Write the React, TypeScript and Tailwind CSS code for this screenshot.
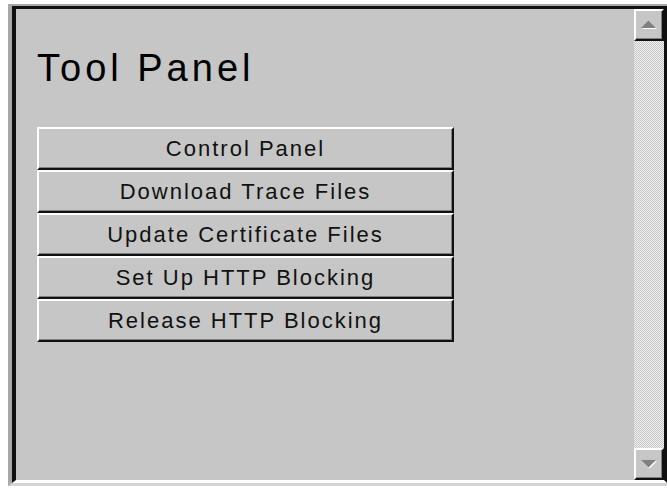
import React from "react";

const actions = [
  "Control Panel",
  "Download Trace Files",
  "Update Certificate Files",
  "Set Up HTTP Blocking",
  "Release HTTP Blocking",
];

function Arrow({ up }: { up: boolean }) {
  return (
    <svg width="18" height="10" viewBox="0 0 18 10">
      {up ? (
        <>
          <polygon points="2,9 17,9 9.5,1.5" fill="#ffffff" />
          <polygon points="1,8 16,8 8.5,0.5" fill="#808080" />
        </>
      ) : (
        <>
          <polygon points="2,2 17,2 9.5,9.5" fill="#ffffff" />
          <polygon points="1,1 16,1 8.5,8.5" fill="#808080" />
        </>
      )}
    </svg>
  );
}

function ScrollButton({ up }: { up: boolean }) {
  return (
    <div className="h-[32px] w-full flex items-center justify-center bg-[#c6c6c6] border-t-2 border-l-2 border-t-white border-l-white border-b-2 border-r-2 border-b-[#101010] border-r-[#101010] shadow-[inset_-1px_-1px_0_#808080]">
      <Arrow up={up} />
    </div>
  );
}

export default function App() {
  return (
    <div className="w-[667px] h-[490px] bg-white pt-[4px] pl-[8px]" style={{ fontFamily: '"Liberation Sans", Arial, sans-serif' }}>
      <div className="w-[659px] h-[482px] border-l-4 border-t-2 border-b-[3px] border-l-[#a8a8a8] border-t-[#a8a8a8] border-b-[#d4d4d4]">
        <div className="h-full flex border-l-4 border-t-[3px] border-r-[3px] border-b-[3px] border-l-[#101010] border-t-[#101010] border-r-[#101010] border-b-white">
          <div className="flex-1 bg-[#c6c6c6] pl-[21px] pt-[40px]">
            <h1 className="text-[38px] leading-none tracking-[4px] text-black font-normal">Tool Panel</h1>
            <div className="mt-[40px] w-[417px] flex flex-col">
              {actions.map((label) => (
                <div
                  key={label}
                  className="h-[43px] flex items-center justify-center bg-[#c6c6c6] border-t-2 border-l-2 border-t-white border-l-white border-b-2 border-r-2 border-b-[#101010] border-r-[#101010] shadow-[inset_-1px_-1px_0_#808080] text-[22px] tracking-[2px] text-[#111]"
                >
                  {label}
                </div>
              ))}
            </div>
          </div>
          <div className="w-[30px] flex flex-col bg-[repeating-conic-gradient(#c4c4c4_0%_25%,#f2f2f2_0%_50%)] bg-[length:2px_2px]">
            <ScrollButton up={true} />
            <div className="flex-1" />
            <ScrollButton up={false} />
          </div>
        </div>
      </div>
    </div>
  );
}
